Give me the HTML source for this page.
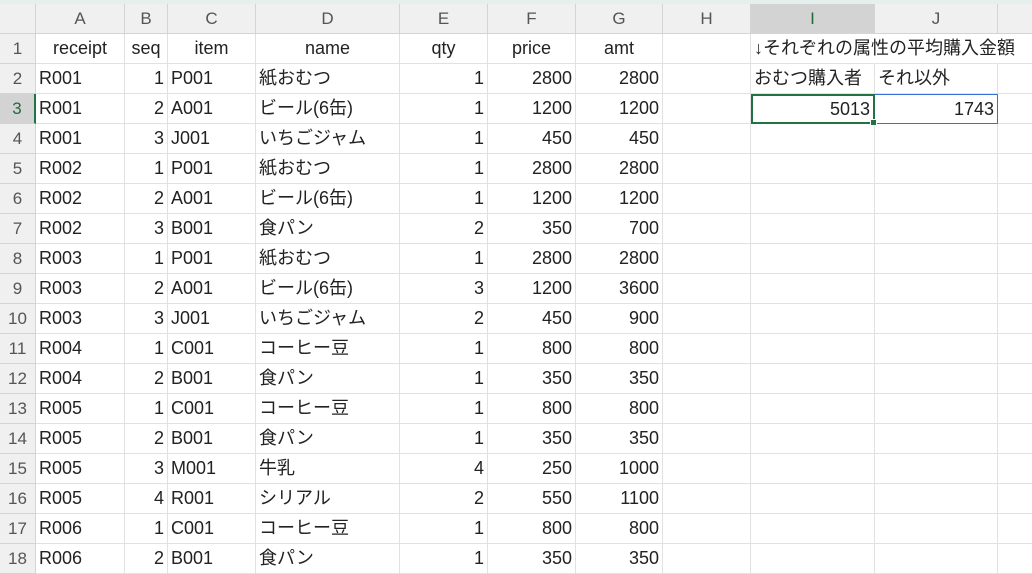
<!DOCTYPE html><html><head><meta charset="utf-8"><style>
body{margin:0;width:1032px;height:574px;overflow:hidden;background:#fff;font-family:"Liberation Sans","Noto Sans CJK JP",sans-serif;position:relative}
.top{position:absolute;left:0;top:0;width:1032px;height:4px;background:#e4efee}
.row{position:absolute;left:0;height:30px;display:flex;width:1040px}
.row>div{height:30px;box-sizing:border-box;border-right:1px solid #e1e1e1;border-bottom:1px solid #e1e1e1;font-size:18px;line-height:29px;color:#222;padding:0 3px;white-space:nowrap;flex:none;overflow:visible}
.row>div:nth-child(1){width:36px;background:#f0f0f0;color:#555;text-align:center;font-size:17px;border-color:#d4d4d4;padding:0}
.row>div:nth-child(2){width:89px}.row>div:nth-child(3){width:43px}.row>div:nth-child(4){width:88px}.row>div:nth-child(5){width:144px}.row>div:nth-child(6){width:88px}.row>div:nth-child(7){width:88px}.row>div:nth-child(8){width:87px}.row>div:nth-child(9){width:88px}.row>div:nth-child(10){width:124px}.row>div:nth-child(11){width:123px}.row>div:nth-child(12){width:40px}
.h>div{background:#f0f0f0;color:#555;text-align:center;font-size:17px;border-color:#d4d4d4!important}
.r{text-align:right}.c{text-align:center}
.selh{background:#d3d3d3!important;color:#1e6b3e!important;border-bottom:2px solid #217346!important}
.selr{background:#d3d3d3!important;color:#1e6b3e!important;border-right:2px solid #217346!important}
.act{border:2px solid #217346!important;position:relative;line-height:27px!important}
.act:after{content:"";position:absolute;right:-4px;bottom:-4px;width:5px;height:5px;background:#217346;border:1px solid #fff;z-index:2}
.blu{border:1px solid #3a6fd6!important;border-left:none!important;margin-top:0}
</style></head><body><div class="top"></div>
<div class="row h" style="top:4px"><div></div><div>A</div><div>B</div><div>C</div><div>D</div><div>E</div><div>F</div><div>G</div><div>H</div><div class="selh">I</div><div>J</div><div></div></div>
<div class="row" style="top:34px"><div>1</div><div class="c">receipt</div><div class="c">seq</div><div class="c">item</div><div class="c">name</div><div class="c">qty</div><div class="c">price</div><div class="c">amt</div><div></div><div style="overflow:visible;border-right-color:transparent">↓それぞれの属性の平均購入金額</div><div style="border-right-color:transparent"></div><div></div></div>
<div class="row" style="top:64px"><div>2</div><div>R001</div><div class="r">1</div><div>P001</div><div>紙おむつ</div><div class="r">1</div><div class="r">2800</div><div class="r">2800</div><div></div><div>おむつ購入者</div><div>それ以外</div><div></div></div>
<div class="row" style="top:94px"><div class="selr">3</div><div>R001</div><div class="r">2</div><div>A001</div><div>ビール(6缶)</div><div class="r">1</div><div class="r">1200</div><div class="r">1200</div><div></div><div class="r act">5013</div><div class="r blu">1743</div><div></div></div>
<div class="row" style="top:124px"><div>4</div><div>R001</div><div class="r">3</div><div>J001</div><div>いちごジャム</div><div class="r">1</div><div class="r">450</div><div class="r">450</div><div></div><div></div><div></div><div></div></div>
<div class="row" style="top:154px"><div>5</div><div>R002</div><div class="r">1</div><div>P001</div><div>紙おむつ</div><div class="r">1</div><div class="r">2800</div><div class="r">2800</div><div></div><div></div><div></div><div></div></div>
<div class="row" style="top:184px"><div>6</div><div>R002</div><div class="r">2</div><div>A001</div><div>ビール(6缶)</div><div class="r">1</div><div class="r">1200</div><div class="r">1200</div><div></div><div></div><div></div><div></div></div>
<div class="row" style="top:214px"><div>7</div><div>R002</div><div class="r">3</div><div>B001</div><div>食パン</div><div class="r">2</div><div class="r">350</div><div class="r">700</div><div></div><div></div><div></div><div></div></div>
<div class="row" style="top:244px"><div>8</div><div>R003</div><div class="r">1</div><div>P001</div><div>紙おむつ</div><div class="r">1</div><div class="r">2800</div><div class="r">2800</div><div></div><div></div><div></div><div></div></div>
<div class="row" style="top:274px"><div>9</div><div>R003</div><div class="r">2</div><div>A001</div><div>ビール(6缶)</div><div class="r">3</div><div class="r">1200</div><div class="r">3600</div><div></div><div></div><div></div><div></div></div>
<div class="row" style="top:304px"><div>10</div><div>R003</div><div class="r">3</div><div>J001</div><div>いちごジャム</div><div class="r">2</div><div class="r">450</div><div class="r">900</div><div></div><div></div><div></div><div></div></div>
<div class="row" style="top:334px"><div>11</div><div>R004</div><div class="r">1</div><div>C001</div><div>コーヒー豆</div><div class="r">1</div><div class="r">800</div><div class="r">800</div><div></div><div></div><div></div><div></div></div>
<div class="row" style="top:364px"><div>12</div><div>R004</div><div class="r">2</div><div>B001</div><div>食パン</div><div class="r">1</div><div class="r">350</div><div class="r">350</div><div></div><div></div><div></div><div></div></div>
<div class="row" style="top:394px"><div>13</div><div>R005</div><div class="r">1</div><div>C001</div><div>コーヒー豆</div><div class="r">1</div><div class="r">800</div><div class="r">800</div><div></div><div></div><div></div><div></div></div>
<div class="row" style="top:424px"><div>14</div><div>R005</div><div class="r">2</div><div>B001</div><div>食パン</div><div class="r">1</div><div class="r">350</div><div class="r">350</div><div></div><div></div><div></div><div></div></div>
<div class="row" style="top:454px"><div>15</div><div>R005</div><div class="r">3</div><div>M001</div><div>牛乳</div><div class="r">4</div><div class="r">250</div><div class="r">1000</div><div></div><div></div><div></div><div></div></div>
<div class="row" style="top:484px"><div>16</div><div>R005</div><div class="r">4</div><div>R001</div><div>シリアル</div><div class="r">2</div><div class="r">550</div><div class="r">1100</div><div></div><div></div><div></div><div></div></div>
<div class="row" style="top:514px"><div>17</div><div>R006</div><div class="r">1</div><div>C001</div><div>コーヒー豆</div><div class="r">1</div><div class="r">800</div><div class="r">800</div><div></div><div></div><div></div><div></div></div>
<div class="row" style="top:544px"><div>18</div><div>R006</div><div class="r">2</div><div>B001</div><div>食パン</div><div class="r">1</div><div class="r">350</div><div class="r">350</div><div></div><div></div><div></div><div></div></div>
</body></html>
